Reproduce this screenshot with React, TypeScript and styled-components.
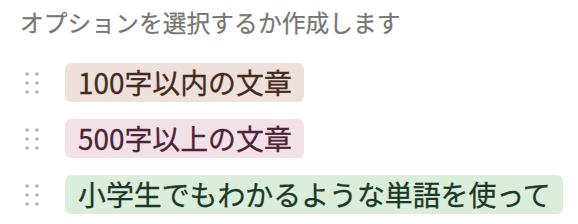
import React from "react";
import styled, { createGlobalStyle } from "styled-components";

const Global = createGlobalStyle`
  html, body { margin: 0; padding: 0; background: #ffffff; }
  body { font-family: "Noto Sans CJK JP", "Noto Sans", sans-serif; }
`;

const Page = styled.div`
  padding: 7px 0 0 20px;
  width: 578px;
  height: 224px;
  box-sizing: border-box;
`;

const Title = styled.div`
  font-size: 23.7px;
  line-height: 30px;
  font-weight: 400;
  color: #77766f;
  letter-spacing: 0.1px;
  -webkit-text-stroke: 0.25px #77766f;
`;

const List = styled.div`
  margin-top: 26px;
  display: flex;
  flex-direction: column;
  gap: 17px;
`;

const Row = styled.div`
  display: flex;
  align-items: center;
  height: 39px;
`;

const Handle = styled.svg`
  width: 16px;
  height: 24px;
  margin-left: 4px;
  margin-right: 25px;
  flex: none;
`;

type Tone = "brown" | "pink" | "green";

const tones: Record<Tone, { bg: string; fg: string }> = {
  brown: { bg: "#eee0da", fg: "#442a1e" },
  pink: { bg: "#f3e1e8", fg: "#4c2337" },
  green: { bg: "#dbeddb", fg: "#1c3829" },
};

const Pill = styled.div<{ $tone: Tone }>`
  height: 39px;
  display: inline-flex;
  align-items: center;
  padding: 0 12px 0 13px;
  border-radius: 6px;
  background: ${(p) => tones[p.$tone].bg};
  color: ${(p) => tones[p.$tone].fg};
  font-size: 27.9px;
  font-weight: 400;
  -webkit-text-stroke: 0.3px ${(p) => tones[p.$tone].fg};
  line-height: 39px;
  white-space: nowrap;
`;

const DragDots = () => (
  <Handle viewBox="0 0 16 24">
    {[3, 12, 21].map((y) =>
      [3, 13].map((x) => <circle key={`${x}-${y}`} cx={x} cy={y} r={1.8} fill="#b4b3b0" />)
    )}
  </Handle>
);

const options: { label: string; tone: Tone }[] = [
  { label: "100字以内の文章", tone: "brown" },
  { label: "500字以上の文章", tone: "pink" },
  { label: "小学生でもわかるような単語を使って", tone: "green" },
];

export default function App() {
  return (
    <>
      <Global />
      <Page>
        <Title>オプションを選択するか作成します</Title>
        <List>
          {options.map((o) => (
            <Row key={o.label}>
              <DragDots />
              <Pill $tone={o.tone}>{o.label}</Pill>
            </Row>
          ))}
        </List>
      </Page>
    </>
  );
}
